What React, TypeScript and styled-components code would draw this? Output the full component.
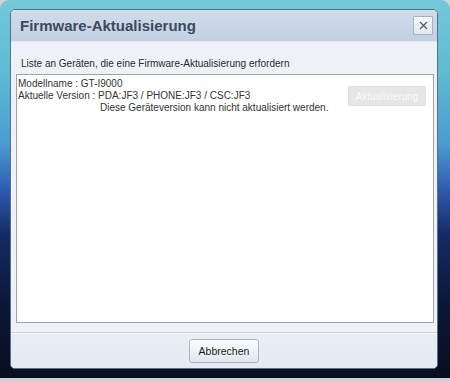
import React from 'react';
import styled, { createGlobalStyle } from 'styled-components';

const GlobalStyle = createGlobalStyle`
  html, body {
    margin: 0;
    padding: 0;
    background: #d4d4d4;
  }
  body {
    font-family: "Liberation Sans", Arial, sans-serif;
  }
`;

const Frame = styled.div`
  box-sizing: border-box;
  width: 450px;
  height: 378px;
  padding: 9px 12px 9px 10px;
  border-radius: 9px 9px 0 0;
  background: linear-gradient(
    180deg,
    #74c8da 0%,
    #5cbad2 20%,
    #4a9cd0 38%,
    #2f5cb0 50%,
    #152a66 62%,
    #0c1838 80%,
    #080e1e 100%
  );
`;

const Dialog = styled.div`
  box-sizing: border-box;
  height: 100%;
  display: flex;
  flex-direction: column;
  border: 1px solid #58708a;
  border-radius: 5px;
  overflow: hidden;
  background: #eef2f8;
`;

const TitleBar = styled.div`
  height: 31px;
  flex-shrink: 0;
  display: flex;
  align-items: center;
  justify-content: space-between;
  padding: 0 4px 0 9px;
  background: linear-gradient(180deg, #d1dcea 0%, #c2d0e2 100%);
  border-bottom: 1px solid #dfe6f0;
`;

const Title = styled.h1`
  margin: 0;
  font-size: 15px;
  font-weight: bold;
  color: #3b4a5e;
`;

const CloseButton = styled.button`
  box-sizing: border-box;
  width: 20px;
  height: 19px;
  padding: 0;
  display: flex;
  align-items: center;
  justify-content: center;
  border: 1px solid #a4b2c4;
  border-radius: 1px;
  background: linear-gradient(180deg, #f4f7fb 0%, #e2e8f0 100%);
`;

const Body = styled.div`
  flex: 1;
  display: flex;
  flex-direction: column;
  padding: 0 3px 9px 5px;
  border-bottom: 1px solid #c9d1dc;
`;

const Label = styled.p`
  margin: 0;
  height: 32px;
  display: flex;
  align-items: flex-end;
  padding: 0 0 5px 5px;
  box-sizing: border-box;
  font-size: 10px;
  color: #2a2a2a;
`;

const ListBox = styled.div`
  flex: 1;
  background: #fff;
  border: 1px solid #9ea4ac;
  display: flex;
  justify-content: space-between;
  align-items: flex-start;
  padding: 3px 7px 0 1px;
`;

const DeviceInfo = styled.div`
  font-size: 10px;
  line-height: 12px;
  color: #333;
`;

const Line = styled.div<{ $indent?: number }>`
  padding-left: ${({ $indent }) => $indent ?? 0}px;
  white-space: nowrap;
`;

const UpdateButton = styled.button`
  box-sizing: border-box;
  margin-top: 8px;
  width: 78px;
  height: 20px;
  border: 1px solid #e0e0e0;
  border-radius: 2px;
  background: #e6e6e6;
  color: #fbfbfb;
  font-family: inherit;
  font-size: 10px;
  padding: 0;
`;

const Footer = styled.div`
  height: 34px;
  flex-shrink: 0;
  display: flex;
  align-items: center;
  justify-content: center;
  border-top: 1px solid #f8fafd;
  background: linear-gradient(180deg, #e9eef5 0%, #e4eaf2 100%);
`;

const CancelButton = styled.button`
  box-sizing: border-box;
  width: 70px;
  height: 24px;
  border: 1px solid #a9b3c0;
  border-radius: 3px;
  background: linear-gradient(180deg, #fbfcfe 0%, #eef2f6 50%, #e0e6ee 100%);
  color: #1c1c1c;
  font-family: inherit;
  font-size: 10.5px;
  padding: 0;
`;

const BottomStrip = styled.div`
  height: 3px;
  background: #d2d2d2;
`;

const CloseIcon = () => (
  <svg width="9" height="9" viewBox="0 0 9 9">
    <path d="M1 1L8 8M8 1L1 8" stroke="#4a5566" strokeWidth="1.1" />
  </svg>
);

export default function App() {
  return (
    <>
      <GlobalStyle />
      <Frame>
        <Dialog>
          <TitleBar>
            <Title>Firmware-Aktualisierung</Title>
            <CloseButton aria-label="Schließen">
              <CloseIcon />
            </CloseButton>
          </TitleBar>
          <Body>
            <Label>Liste an Geräten, die eine Firmware-Aktualisierung erfordern</Label>
            <ListBox>
              <DeviceInfo>
                <Line>Modellname : GT-I9000</Line>
                <Line>Aktuelle Version : PDA:JF3 / PHONE:JF3 / CSC:JF3</Line>
                <Line $indent={82}>Diese Geräteversion kann nicht aktualisiert werden.</Line>
              </DeviceInfo>
              <UpdateButton disabled>Aktualisierung</UpdateButton>
            </ListBox>
          </Body>
          <Footer>
            <CancelButton>Abbrechen</CancelButton>
          </Footer>
        </Dialog>
      </Frame>
      <BottomStrip />
    </>
  );
}
